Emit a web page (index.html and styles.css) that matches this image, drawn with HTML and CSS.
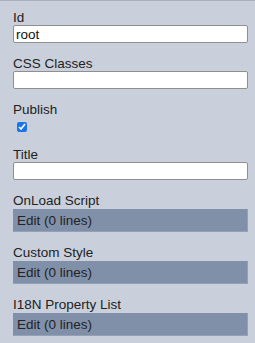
FILE: index.html
```html
<!DOCTYPE html>
<html lang="en">
  <head>
    <meta charset="UTF-8" />
    <title>Properties</title>
    <link rel="stylesheet" href="styles.css">
  </head>
  <body>
    <div class="props">
      <div class="field">
        <span class="label">Id</span>
        <input type="text" class="text-in" value="root" />
      </div>
      <div class="field">
        <span class="label">CSS Classes</span>
        <input type="text" class="text-in" />
      </div>
      <div class="field">
        <span class="label">Publish</span>
        <input type="checkbox" class="check" checked />
      </div>
      <div class="field">
        <span class="label">Title</span>
        <input type="text" class="text-in" />
      </div>
      <div class="field">
        <span class="label">OnLoad Script</span>
        <div class="edit">Edit (0 lines)</div>
      </div>
      <div class="field">
        <span class="label">Custom Style</span>
        <div class="edit">Edit (0 lines)</div>
      </div>
      <div class="field">
        <span class="label">I18N Property List</span>
        <div class="edit">Edit (0 lines)</div>
      </div>
    </div>
  </body>
</html>
```

FILE: styles.css
```css
body {
  margin: 0;
  padding: 0;
  background: #c9d0dc;
  border-top: 1px solid #a9afbb;
  font-family: "Liberation Sans", Arial, sans-serif;
  font-size: 13.5px;
  color: #222;
}
.props {
  padding: 9px 7px 0 13px;
  display: flex;
  flex-direction: column;
  gap: 13px;
}
.field {
  display: flex;
  flex-direction: column;
}
.label {
  display: block;
  line-height: 15px;
}
.text-in {
  box-sizing: border-box;
  width: 100%;
  height: 18px;
  margin: 0;
  padding: 0 2px;
  border: 1px solid #8f8f8f;
  border-radius: 2px;
  background: white;
  font-family: "Liberation Sans", Arial, sans-serif;
  font-size: 13.5px;
  color: #111;
  outline: none;
}
.check {
  width: 10px;
  height: 10px;
  margin: 5px 0 2px 4px;
  accent-color: #1a73e8;
}
.edit {
  box-sizing: border-box;
  height: 23px;
  margin-top: 1px;
  padding: 3px 4px 0;
  background: #8190a9;
  border-right: 1px solid #93a0b6;
  border-bottom: 1px solid #93a0b6;
  line-height: 18px;
  color: #222;
}
```
